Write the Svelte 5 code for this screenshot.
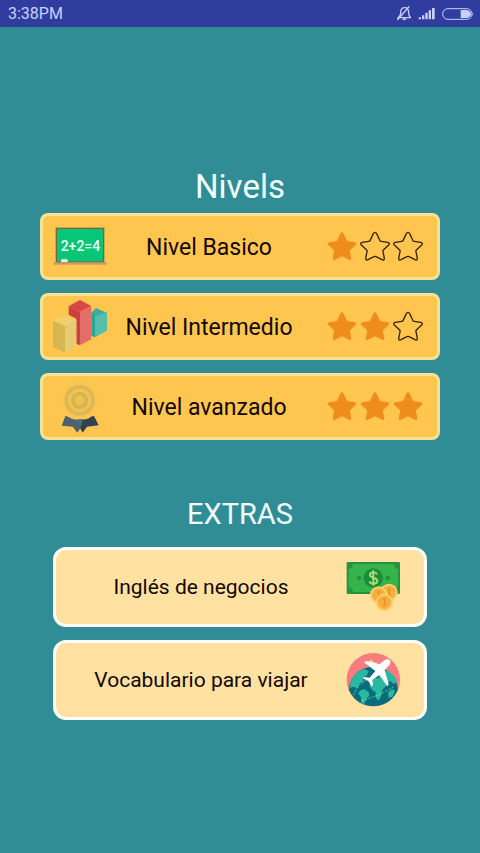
<script lang="ts">
	interface Level {
		name: string;
		icon: 'board' | 'blocks' | 'medal';
		stars: number;
	}

	interface Extra {
		name: string;
		icon: 'money' | 'travel';
	}

	const levels: Level[] = [
		{ name: 'Nivel Basico', icon: 'board', stars: 1 },
		{ name: 'Nivel Intermedio', icon: 'blocks', stars: 2 },
		{ name: 'Nivel avanzado', icon: 'medal', stars: 3 }
	];

	const extras: Extra[] = [
		{ name: 'Inglés de negocios', icon: 'money' },
		{ name: 'Vocabulario para viajar', icon: 'travel' }
	];
</script>

{#snippet star(filled: boolean)}
	<svg class={['star', filled && 'filled']} viewBox="0 3 90 90" aria-hidden="true">
		<path
			d="M40 8Q45 0 50 8L60 29Q61 31 64 31L83 34Q91 36 86 42L70 57Q68 59 69 62L73 82Q73 89 66 86L48 77Q45 75 42 77L24 86Q17 89 17 82L21 62Q22 59 20 57L4 42Q-1 36 7 34L26 31Q29 31 30 29Z"
		/>
	</svg>
{/snippet}

{#snippet coin(x: number, y: number)}
	<circle cx={x} cy={y} r="26" fill="#fbd067" />
	<circle cx={x} cy={y} r="20" fill="#f7ad40" />
	<path d="M{x - 4} {y - 8}l5-3v20m-6 0h11" fill="none" stroke="#e9922f" stroke-width="4" />
{/snippet}

{#snippet board()}
	<svg class="icon" viewBox="51 30 162 162" aria-hidden="true">
		<rect x="61" y="55" width="142" height="101" fill="#08c678" stroke="#77663c" stroke-width="4" />
		<text x="74" y="124" font-size="42">2+2=4</text>
		<path d="M75 156v-5q0-3 4-3h13q3 0 3 4v4z" fill="#f3fff5" />
		<rect x="52" y="157" width="160" height="7" fill="#c69a68" />
	</svg>
{/snippet}

{#snippet blocks()}
	<svg class="icon" viewBox="51 30 162 162" aria-hidden="true">
		<path d="M166 68l14-14 33 15-36 18z" fill="#3cae9b" />
		<path d="M166 68l11 8v66l-11-5z" fill="#2ca291" />
		<path d="M177 79l36-12v55l-36 20z" fill="#55bfae" />
		<path d="M98 48l34-18 34 18-34 18z" fill="#d84747" />
		<path d="M98 48l34 18v100l-11-5V86L98 74z" fill="#cb413f" />
		<path d="M132 66l34-18v100l-34 18z" fill="#e36e68" />
		<path d="M51 92l35-14 35 12-34 17z" fill="#efd16f" />
		<path d="M51 92l36 15v81l-36-17z" fill="#d8b650" />
		<path d="M87 107l34-17v81l-34 17z" fill="#e8ca70" />
	</svg>
{/snippet}

{#snippet medal()}
	<svg class="icon" viewBox="51 30 162 162" aria-hidden="true">
		<circle cx="131" cy="88" r="57" fill="#f7c754" />
		<circle cx="131" cy="91" r="46" fill="#dfb750" />
		<circle cx="131" cy="91" r="35" fill="#edc45b" />
		<circle cx="131" cy="91" r="26" fill="#dcb449" />
		<circle cx="131" cy="91" r="14" fill="#edc357" />
		<path d="M88 138q9 1 16 7 14 6 32 4l-2 24-10 15-14-18-33-3z" fill="#4b6270" />
		<path d="M174 138q-8 0-15 7-13 5-26 3l-1 26 8 14 13-18 35-4z" fill="#31424e" />
		<path d="M122 150q10-5 18 2l-7 22z" fill="#526b79" />
	</svg>
{/snippet}

{#snippet money()}
	<svg class="icon" viewBox="33 60 162 162" aria-hidden="true">
		<rect x="35" y="66" width="160" height="96" rx="4" fill="#26943f" />
		<path d="M54 72h122q1 13 13 15v53q-12 3-13 16H54q-1-13-13-16V87q12-2 13-15z" fill="#35b44b" />
		<circle cx="72" cy="114" r="7" fill="#22913a" />
		<circle cx="158" cy="114" r="7" fill="#22913a" />
		<circle cx="115" cy="114" r="29" fill="#1c8b3a" />
		<path
			d="M126 103q-3-6-11-6-10 0-10 8 0 6 10 8 12 3 12 10 0 8-12 8-9 0-12-7M115 91v46"
			fill="none"
			stroke="#a9dc72"
			stroke-width="6"
		/>
		{@render coin(162, 157)}
		{@render coin(131, 165)}
		{@render coin(148, 187)}
	</svg>
{/snippet}

{#snippet travel()}
	<svg class="icon" viewBox="33 54 162 162" aria-hidden="true">
		<clipPath id="badge"><circle cx="115" cy="134" r="80" /></clipPath>
		<g clip-path="url(#badge)">
			<path d="M33 54h162v162H33z" fill="#f77c80" />
			<circle cx="115" cy="169" r="74" fill="#096c7b" />
			<g fill="#29b9a0">
				<path d="M48 137l17-24 22-12 14 8-7 13-11 5 3 12-14 7-3 13-17-4-9 7z" />
				<path d="M74 168l13-6 14 10 2 10-9 9-7 17-8-5-1-17-8-10z" />
				<path d="M106 143l13-13 20-1 13 10 2 13-12 12-3 18-9 15-9-11 1-15-10-5-8-11z" />
				<path d="M135 108l24-1 16 13 13 22-14 4-8-9-9 8-10-13-16-5z" />
				<path d="M159 172l13-10 8 7-8 17-11 2z" />
			</g>
			<path
				d="M55 180l16-29 25-17M80 198l54-19 41-23"
				fill="none"
				stroke="#a5d9b5"
				stroke-width="2"
				stroke-dasharray="7 4"
			/>
			<path d="M101 84l8-8 5 7 14 2" fill="none" stroke="#f4d46f" stroke-width="4" />
		</g>
		<path
			d="M87 82l8-4 38 10 16-13q9-4 15 0 5 6-1 15l-14 15 12 43-4 6-24-34-21 15 2 16-5 3-9-16-17-8 4-4 17 2 17-20z"
			fill="#fff"
		/>
	</svg>
{/snippet}

<div class="screen">
	<header>
		<time>3:38PM</time>
		<div class="status">
			<svg width="14" height="15" viewBox="51 18 42 45" fill="none" aria-label="Silencio" role="img">
				<path
					d="M55 53q7-5 7-15 0-15 12-15t12 15q0 10 6 15zM68 56q5 5 10 0M52 60l36-41"
					stroke="currentColor"
					stroke-width="4"
				/>
			</svg>
			<svg width="17" height="13" viewBox="114 21 51 39" aria-label="Señal" role="img">
				<path
					d="M116 52h7v6h-7zM126 46h7v12h-7zM136 38h7v20h-7zM146 31h7v27h-7zM156 24h8v34h-8z"
					fill="currentColor"
				/>
			</svg>
			<svg width="32" height="12" viewBox="183 21 96 36" aria-label="Batería" role="img">
				<rect
					x="185"
					y="23"
					width="88"
					height="32"
					rx="16"
					fill="none"
					stroke="currentColor"
					stroke-width="3"
				/>
				<path d="M239 27h19q12 3 12 12t-12 12h-19zM275 33q4 6 0 12z" fill="currentColor" />
			</svg>
		</div>
	</header>

	<main>
		<section class="levels">
			<h1>Nivels</h1>
			{#each levels as level (level.name)}
				<button type="button" class="level">
					{#if level.icon === 'board'}
						{@render board()}
					{:else if level.icon === 'blocks'}
						{@render blocks()}
					{:else}
						{@render medal()}
					{/if}
					<span class="label">{level.name}</span>
					<span class="stars">
						{#each [1, 2, 3] as n}
							{@render star(n <= level.stars)}
						{/each}
					</span>
				</button>
			{/each}
		</section>

		<section class="extras">
			<h2>EXTRAS</h2>
			{#each extras as extra (extra.name)}
				<button type="button" class="extra">
					<span class="label">{extra.name}</span>
					{#if extra.icon === 'money'}
						{@render money()}
					{:else}
						{@render travel()}
					{/if}
				</button>
			{/each}
		</section>
	</main>
</div>

<style>
	:global(body) {
		margin: 0;
		background: #318d95;
	}

	.screen {
		min-height: 100vh;
		font-family: Roboto, sans-serif;
		background: #318d95;
	}

	header {
		display: flex;
		align-items: center;
		justify-content: space-between;
		height: 27px;
		padding: 0 6px 0 8px;
		font-size: 16px;
		color: #c9d0ff;
		background: #303d9f;
	}

	.status {
		display: flex;
		align-items: center;
		gap: 7px;
	}

	main {
		display: flex;
		flex-direction: column;
		gap: 54px;
		padding: 140px 40px 40px;
	}

	section {
		display: flex;
		flex-direction: column;
		gap: 13px;
	}

	.extras {
		padding: 0 13px;
	}

	h1,
	h2 {
		margin: 0;
		font-weight: 400;
		line-height: 40px;
		text-align: center;
		color: #f2ffff;
	}

	h1 {
		margin-bottom: -7px;
		font-size: 33px;
	}

	h2 {
		font-size: 29px;
	}

	button {
		display: flex;
		align-items: center;
		box-sizing: border-box;
		width: 100%;
		font-family: inherit;
		color: #120803;
		cursor: pointer;
	}

	.level {
		height: 67px;
		padding: 0 14px 0 10px;
		font-size: 23px;
		background: #ffc64f;
		border: 3px solid #f6e196;
		border-radius: 8px;
	}

	.extra {
		height: 80px;
		padding: 0 24px 0 0;
		font-size: 21px;
		background: #ffe1a2;
		border: 3px solid #fffffa;
		border-radius: 13px;
	}

	.label {
		flex: 1;
		text-align: center;
		white-space: nowrap;
	}

	.level .label {
		padding-top: 2px;
	}

	.icon {
		flex: none;
		width: 54px;
		height: 54px;
	}

	.icon text {
		font-family: Roboto, sans-serif;
		font-weight: 500;
		fill: #effff4;
	}

	.stars {
		display: flex;
		gap: 3px;
		margin-left: 16px;
	}

	.star {
		width: 30px;
		height: 30px;
		overflow: visible;
		fill: none;
		stroke: #39200d;
		stroke-width: 4;
	}

	.star.filled {
		fill: #ee8d1c;
		stroke: none;
	}
</style>
